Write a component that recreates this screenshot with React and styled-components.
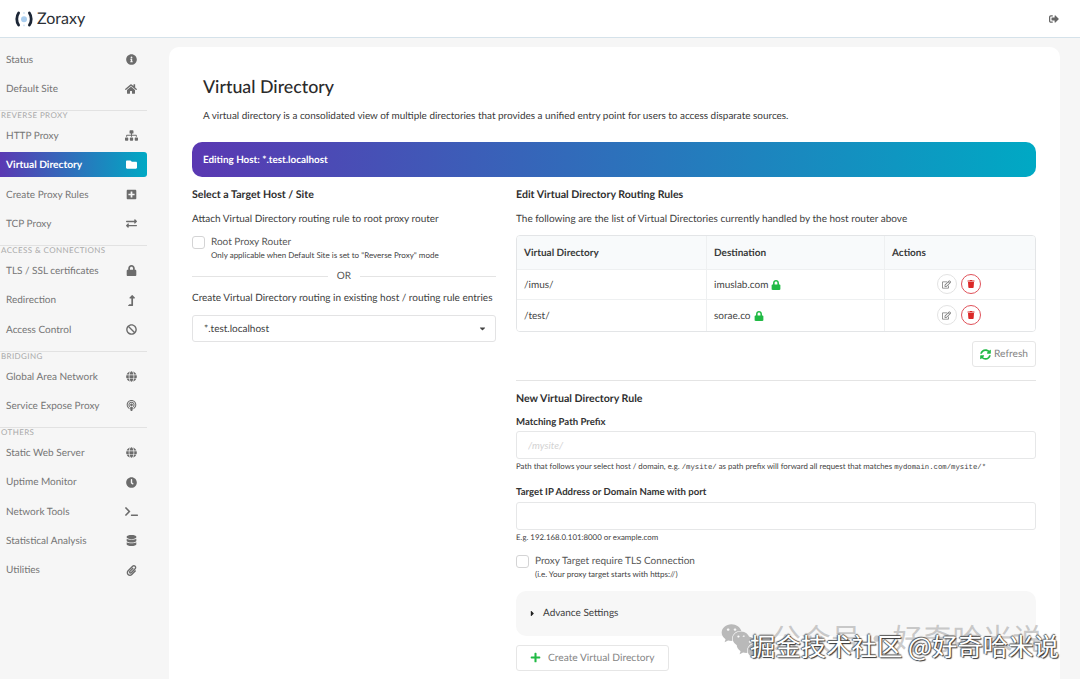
import React from 'react'
import styled, { createGlobalStyle } from 'styled-components'
import {
  FaInfoCircle, FaHome, FaSitemap, FaFolder, FaPlusSquare, FaExchangeAlt, FaLock, FaLevelUpAlt,
  FaBan, FaGlobe, FaPodcast, FaClock, FaTerminal, FaDatabase, FaPaperclip, FaSignOutAlt,
  FaRegEdit, FaTrash, FaSyncAlt, FaPlus, FaCaretDown, FaCaretRight, FaWeixin,
} from 'react-icons/fa'

const navGroups = [
  {
    items: [
      { name: 'Status', icon: FaInfoCircle },
      { name: 'Default Site', icon: FaHome, size: 12 },
    ],
  },
  {
    label: 'REVERSE PROXY',
    items: [
      { name: 'HTTP Proxy', icon: FaSitemap, size: 13 },
      { name: 'Virtual Directory', icon: FaFolder, active: true },
      { name: 'Create Proxy Rules', icon: FaPlusSquare },
      { name: 'TCP Proxy', icon: FaExchangeAlt },
    ],
  },
  {
    label: 'ACCESS & CONNECTIONS',
    items: [
      { name: 'TLS / SSL certificates', icon: FaLock },
      { name: 'Redirection', icon: FaLevelUpAlt },
      { name: 'Access Control', icon: FaBan },
    ],
  },
  {
    label: 'BRIDGING',
    items: [
      { name: 'Global Area Network', icon: FaGlobe },
      { name: 'Service Expose Proxy', icon: FaPodcast },
    ],
  },
  {
    label: 'OTHERS',
    items: [
      { name: 'Static Web Server', icon: FaGlobe },
      { name: 'Uptime Monitor', icon: FaClock },
      { name: 'Network Tools', icon: FaTerminal, size: 13 },
      { name: 'Statistical Analysis', icon: FaDatabase },
      { name: 'Utilities', icon: FaPaperclip },
    ],
  },
]

const rules = [
  { path: '/imus/', dest: 'imuslab.com' },
  { path: '/test/', dest: 'sorae.co' },
]

const GlobalStyle = createGlobalStyle`
  html, body { margin: 0; padding: 0; background: #f6f6f6; }
  body {
    font-family: Lato, "Noto Sans", sans-serif;
    color: #333;
    text-rendering: geometricPrecision;
  }
  * { box-sizing: border-box; }
`

const Page = styled.div`
  position: relative;
  width: 1080px;
  height: 679px;
  overflow: hidden;
  background: #f6f6f6;
`

const Header = styled.header`
  height: 38px;
  background: #fff;
  border-bottom: 1px solid #d5e2ea;
  display: flex;
  align-items: center;
  justify-content: space-between;
  padding: 0 21px 0 14px;
  color: #666;
`

const Logo = styled.div`
  display: flex;
  align-items: center;
  gap: 3px;
  font-size: 16px;
  line-height: 20px;
  color: #2b2f36;
`

const Body = styled.div`
  display: flex;
  align-items: flex-start;
`

const Sidebar = styled.nav`
  width: 169px;
  flex: none;
  padding: 8.5px 22px 0 0;
`

const NavGroup = styled.div`
  &:not(:first-child) {
    margin-top: 9px;
    border-top: 1px solid #e2e2e2;
  }
`

const GroupLabel = styled.div`
  height: 12px;
  padding-left: 1px;
  font-size: 8px;
  line-height: 9px;
  letter-spacing: 0.4px;
  color: #a9a9a9;
`

const NavItem = styled.div`
  height: 25px;
  margin-bottom: 4.35px;
  padding: ${p => (p.$active ? 0 : 1)}px 9px 0 6px;
  display: flex;
  align-items: center;
  justify-content: space-between;
  font-size: ${p => (p.$active ? 10.2 : 10)}px;
  font-weight: ${p => (p.$active ? 700 : 400)};
  color: ${p => (p.$active ? '#fff' : '#757575')};
  background: ${p => (p.$active ? 'linear-gradient(90deg, #5b39b3, #00a9c4)' : 'transparent')};
  border-radius: ${p => (p.$active ? '0 3px 3px 0' : '0')};
`

const NavIcon = styled.span`
  width: 14px;
  display: flex;
  justify-content: center;
  svg {
    font-size: ${p => p.$size || 11}px;
    color: ${p => (p.$active ? '#fff' : '#6c6c6c')};
  }
`

const Card = styled.main`
  width: 891px;
  height: 700px;
  margin-top: 9px;
  padding: 29px 24px 0 23px;
  background: #fff;
  border-radius: 10px 10px 0 0;
`

const Intro = styled.div`
  padding-left: 11px;
`

const Title = styled.h1`
  margin: 0;
  height: 21px;
  font-size: 17.8px;
  line-height: 21px;
  font-weight: 500;
  color: #2b2b2b;
`

const Lead = styled.p`
  margin: 12px 0 0;
  font-size: 9.93px;
  line-height: 14px;
  color: #3a3a3a;
`

const Banner = styled.div`
  height: 35px;
  margin-top: 19px;
  padding: 0 11px;
  display: flex;
  align-items: center;
  border-radius: 10px;
  background: linear-gradient(90deg, #5a38b2, #00a9c4);
  color: #fff;
  font-size: 9.9px;
  font-weight: 700;
`

const Columns = styled.div`
  display: grid;
  grid-template-columns: 304px 520px;
  column-gap: 20px;
  margin-top: 11px;
`

const Column = styled.section`
  min-width: 0;
`

const SectionTitle = styled.h3`
  margin: 0;
  font-size: 10.6px;
  line-height: 14px;
  font-weight: 700;
  color: #2f2f2f;
`

const Text = styled.p`
  margin: ${p => p.$top || 0}px 0 0;
  font-size: 10px;
  line-height: 14px;
  color: #3d3d3d;
`

const CheckRow = styled.div`
  display: flex;
  align-items: flex-start;
  gap: ${p => p.$gap}px;
  margin-top: ${p => p.$top}px;
`

const CheckBox = styled.span`
  width: 13px;
  height: 13px;
  flex: none;
  border: 1px solid #d4d4d5;
  border-radius: 3px;
  background: #fff;
`

const CheckLabel = styled.div`
  font-size: 10px;
  line-height: 13px;
  color: #555;
`

const CheckHint = styled.div`
  font-size: 8px;
  line-height: 12px;
  color: #444;
`

const OrDivider = styled.div`
  display: flex;
  align-items: center;
  gap: 9px;
  margin-top: 8px;
  font-size: 10px;
  line-height: 14px;
  color: #555;
  &::before, &::after {
    content: '';
    flex: 1;
    height: 1px;
    background: #e4e4e4;
  }
`

const SelectBox = styled.div`
  height: 27px;
  margin-top: 10px;
  padding: 0 11px;
  display: flex;
  align-items: center;
  justify-content: space-between;
  border: 1px solid #e3e3e4;
  border-radius: 3px;
  font-size: 10px;
  color: #3d3d3d;
  svg { font-size: 9px; color: #444; margin-right: -3px; }
`

const Table = styled.div`
  margin-top: 9px;
  border: 1px solid #e3e5e7;
  border-radius: 4px;
  overflow: hidden;
`

const Row = styled.div`
  display: grid;
  grid-template-columns: 189px 178px 1fr;
  height: ${p => (p.$head ? 33.5 : 30.5)}px;
  background: ${p => (p.$head ? '#f8fafb' : '#fff')};
  border-bottom: ${p => (p.$last ? 'none' : '1px solid #eef0f1')};
`

const Cell = styled.div`
  display: flex;
  align-items: center;
  gap: 3px;
  padding: 2px 0 0 7px;
  font-size: 10px;
  font-weight: ${p => (p.$head ? 700 : 400)};
  color: ${p => (p.$head ? '#3a3a3a' : '#444')};
  &:not(:first-child) { border-left: 1px solid #eef0f1; }
  > svg { font-size: 10px; color: #21ba45; }
`

const ActionCell = styled(Cell)`
  justify-content: center;
  padding: 0 3px 0 0;
  gap: 4px;
`

const RoundButton = styled.span`
  width: 20px;
  height: 20px;
  display: flex;
  align-items: center;
  justify-content: center;
  border-radius: 50%;
  background: #fff;
  border: 1px solid ${p => (p.$danger ? '#e0525a' : '#e3e3e3')};
  svg { font-size: ${p => (p.$danger ? 8 : 9)}px; color: ${p => (p.$danger ? '#db2828' : '#777')}; }
`

const RefreshRow = styled.div`
  display: flex;
  justify-content: flex-end;
  margin-top: 9.5px;
`

const GhostButton = styled.span`
  height: 26px;
  padding: 0 ${p => p.$pad}px;
  display: inline-flex;
  align-items: center;
  gap: ${p => p.$gap}px;
  border: 1px solid #e6e6e6;
  border-radius: 3px;
  background: #fff;
  font-size: 10.2px;
  color: #858585;
  svg { font-size: 11px; color: #21ba45; }
`

const Rule = styled.hr`
  margin: 13px 0 10.5px;
  border: 0;
  border-top: 1px solid #e4e4e4;
`

const FieldLabel = styled.label`
  display: block;
  margin-top: ${p => p.$top}px;
  font-size: 9.6px;
  line-height: 13px;
  font-weight: 700;
  color: #333;
`

const Input = styled.input`
  display: block;
  width: 100%;
  height: 28px;
  margin-top: 2.5px;
  padding: 0 11px;
  border: 1px solid #e6e7e8;
  border-radius: 3px;
  background: #fff;
  outline: none;
  font-family: inherit;
  font-size: 10px;
  &::placeholder { color: #d2d2d2; font-style: italic; }
`

const Help = styled.div`
  margin-top: 2px;
  font-size: 7.86px;
  line-height: 11px;
  white-space: nowrap;
  color: #3f3f3f;
`

const Mono = styled.code`
  font-family: "Liberation Mono", monospace;
  font-size: 7.3px;
`

const Accordion = styled.div`
  height: 45px;
  margin-top: 10.5px;
  padding: 0 12px;
  display: flex;
  align-items: center;
  gap: 6px;
  border-radius: 10px;
  background: #f7f7f7;
  font-size: 10px;
  color: #3d3d3d;
  svg { font-size: 9px; color: #222; }
`

const CreateRow = styled.div`
  margin-top: 9px;
`

const Watermark = styled.div`
  position: absolute;
  left: 720px;
  top: 618px;
  width: 350px;
  height: 50px;
  pointer-events: none;
`

const WeChat = styled.span`
  position: absolute;
  left: ${p => p.$left}px;
  top: ${p => p.$top}px;
  color: #b9b9b9;
  font-size: 29px;
  line-height: 0;
`

const GrayMark = styled.span`
  position: absolute;
  left: 51px;
  top: 0;
  font-family: "Noto Sans CJK SC", sans-serif;
  font-size: 30px;
  line-height: 38px;
  word-spacing: -6px;
  white-space: nowrap;
  color: rgba(160, 160, 160, 0.55);
`

const WhiteMark = styled.span`
  position: absolute;
  left: 30px;
  top: 11px;
  font-family: "Noto Sans CJK SC", sans-serif;
  font-size: 25.4px;
  line-height: 34px;
  white-space: nowrap;
  color: #fff;
  text-shadow: 1px 1px 1px #333, -1px 0 1px #555, 0 -1px 1px #555;
`

const LogoMark = () => (
  <svg width="20" height="18" viewBox="0 0 20 18">
    <path d="M4.6 3C2.2 6.4 2.2 11.6 4.6 15" fill="none" stroke="#1c2636" strokeWidth="2.8" strokeLinecap="round" />
    <path d="M15.4 3C17.8 6.4 17.8 11.6 15.4 15" fill="none" stroke="#1c2636" strokeWidth="2.8" strokeLinecap="round" />
    <circle cx="10" cy="9.2" r="3" fill="#a9cdee" />
    <circle cx="10" cy="3" r="0.9" fill="#cfe2f4" />
    <circle cx="10" cy="15.4" r="0.9" fill="#cfe2f4" />
  </svg>
)

const App = () => {
  return (
    <Page>
      <GlobalStyle />
      <Header>
        <Logo>
          <LogoMark />
          Zoraxy
        </Logo>
        <FaSignOutAlt size={10} />
      </Header>
      <Body>
        <Sidebar>
          {navGroups.map((group, i) => (
            <NavGroup key={i}>
              {group.label && <GroupLabel>{group.label}</GroupLabel>}
              {group.items.map(({ name, icon: Icon, active, size }) => (
                <NavItem key={name} $active={active}>
                  {name}
                  <NavIcon $size={size} $active={active}><Icon /></NavIcon>
                </NavItem>
              ))}
            </NavGroup>
          ))}
        </Sidebar>
        <Card>
          <Intro>
            <Title>Virtual Directory</Title>
            <Lead>A virtual directory is a consolidated view of multiple directories that provides a unified entry point for users to access disparate sources.</Lead>
          </Intro>
          <Banner>Editing Host: *.test.localhost</Banner>
          <Columns>
            <Column>
              <SectionTitle>Select a Target Host / Site</SectionTitle>
              <Text $top={10}>Attach Virtual Directory routing rule to root proxy router</Text>
              <CheckRow $gap={6} $top={10}>
                <CheckBox />
                <div>
                  <CheckLabel>Root Proxy Router</CheckLabel>
                  <CheckHint>Only applicable when Default Site is set to "Reverse Proxy" mode</CheckHint>
                </div>
              </CheckRow>
              <OrDivider>OR</OrDivider>
              <Text $top={8}>Create Virtual Directory routing in existing host / routing rule entries</Text>
              <SelectBox>
                *.test.localhost
                <FaCaretDown />
              </SelectBox>
            </Column>
            <Column>
              <SectionTitle>Edit Virtual Directory Routing Rules</SectionTitle>
              <Text $top={10}>The following are the list of Virtual Directories currently handled by the host router above</Text>
              <Table>
                <Row $head>
                  <Cell $head>Virtual Directory</Cell>
                  <Cell $head>Destination</Cell>
                  <Cell $head>Actions</Cell>
                </Row>
                {rules.map((rule, i) => (
                  <Row key={rule.path} $last={i === rules.length - 1}>
                    <Cell>{rule.path}</Cell>
                    <Cell>{rule.dest} <FaLock /></Cell>
                    <ActionCell>
                      <RoundButton><FaRegEdit /></RoundButton>
                      <RoundButton $danger><FaTrash /></RoundButton>
                    </ActionCell>
                  </Row>
                ))}
              </Table>
              <RefreshRow>
                <GhostButton $pad={7} $gap={3}><FaSyncAlt /> Refresh</GhostButton>
              </RefreshRow>
              <Rule />
              <SectionTitle>New Virtual Directory Rule</SectionTitle>
              <FieldLabel $top={10}>Matching Path Prefix</FieldLabel>
              <Input placeholder="/mysite/" />
              <Help>
                Path that follows your select host / domain, e.g. <Mono>/mysite/</Mono> as path prefix will forward all request that matches <Mono>mydomain.com/mysite/*</Mono>
              </Help>
              <FieldLabel $top={12}>Target IP Address or Domain Name with port</FieldLabel>
              <Input />
              <Help>E.g. 192.168.0.101:8000 or example.com</Help>
              <CheckRow $gap={6} $top={12.5}>
                <CheckBox />
                <div>
                  <CheckLabel>Proxy Target require TLS Connection</CheckLabel>
                  <CheckHint>(i.e. Your proxy target starts with https://)</CheckHint>
                </div>
              </CheckRow>
              <Accordion>
                <FaCaretRight />
                Advance Settings
              </Accordion>
              <CreateRow>
                <GhostButton $pad={13} $gap={7}><FaPlus /> Create Virtual Directory</GhostButton>
              </CreateRow>
            </Column>
          </Columns>
        </Card>
      </Body>
      <Watermark>
        <WeChat $left={1} $top={3}><FaWeixin /></WeChat>
        <GrayMark>公众号 · 好奇哈米说</GrayMark>
        <WeChat $left={16} $top={15}><FaWeixin /></WeChat>
        <WhiteMark>掘金技术社区 @好奇哈米说</WhiteMark>
      </Watermark>
    </Page>
  )
}

export default App
